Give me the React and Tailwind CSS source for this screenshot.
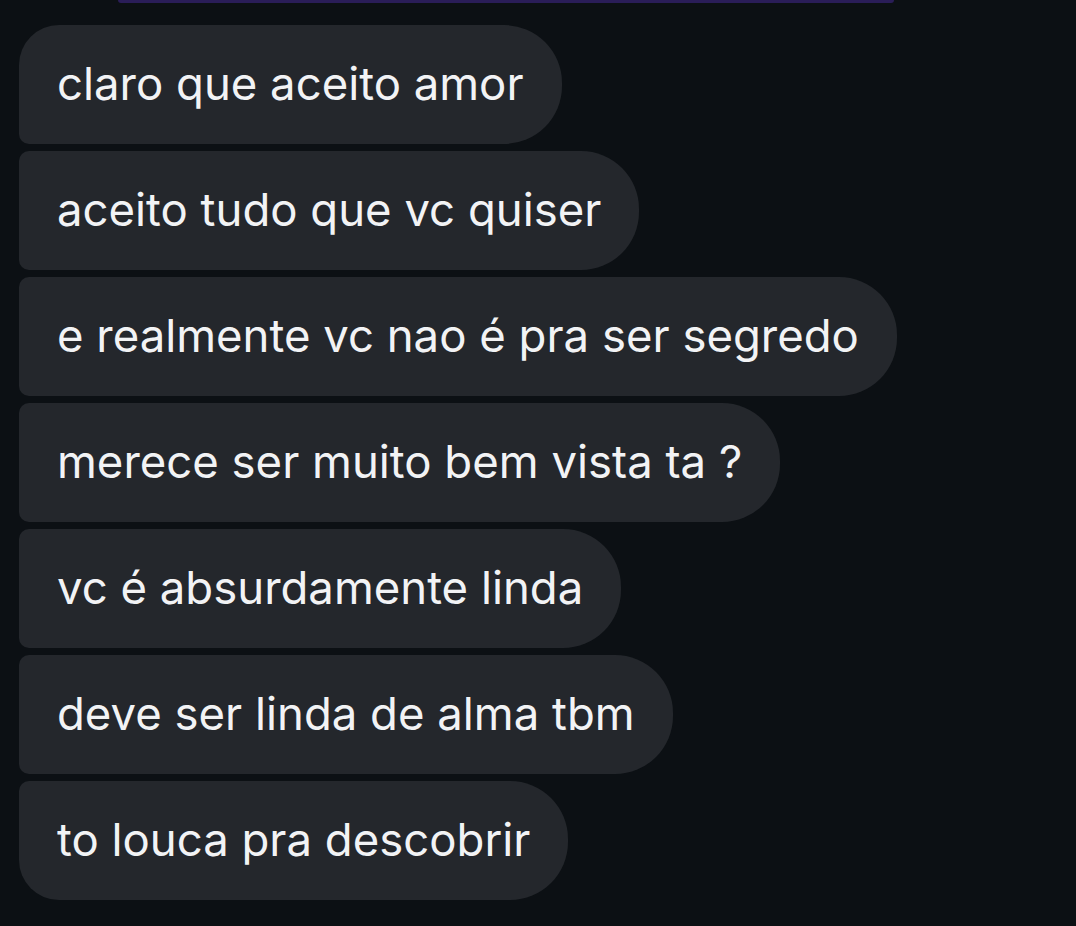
export default function App() {
  const msgs = [
    "claro que aceito amor",
    "aceito tudo que vc quiser",
    "e realmente vc nao é pra ser segredo",
    "merece ser muito bem vista ta ?",
    "vc é absurdamente linda",
    "deve ser linda de alma tbm",
    "to louca pra descobrir",
  ];
  return (
    <div className="w-[1076px] h-[926px] bg-[#0c1014] overflow-hidden" style={{ fontFamily: "Inter, 'Noto Sans', sans-serif" }}>
      <div className="ml-[118px] w-[776px] h-[3px] bg-[#2a1d58] rounded-b-[3px]" />
      <div className="flex flex-col items-start gap-[7px] pl-[19px] pt-[22px]">
        {msgs.map((m, i) => {
          const first = i === 0;
          const last = i === msgs.length - 1;
          const cls = first
            ? "rounded-tl-[40px] rounded-bl-[10px]"
            : last
            ? "rounded-tl-[10px] rounded-bl-[40px]"
            : "rounded-l-[10px]";
          return (
            <div
              key={i}
              className={`h-[119px] flex items-center pl-[38px] pr-[38px] bg-[#24272c] rounded-r-[58px] ${cls}`}
            >
              <span className="text-[45.5px] leading-none text-[#f2f3f5] tracking-[0px] pb-[2px]">{m}</span>
            </div>
          );
        })}
      </div>
    </div>
  );
}
